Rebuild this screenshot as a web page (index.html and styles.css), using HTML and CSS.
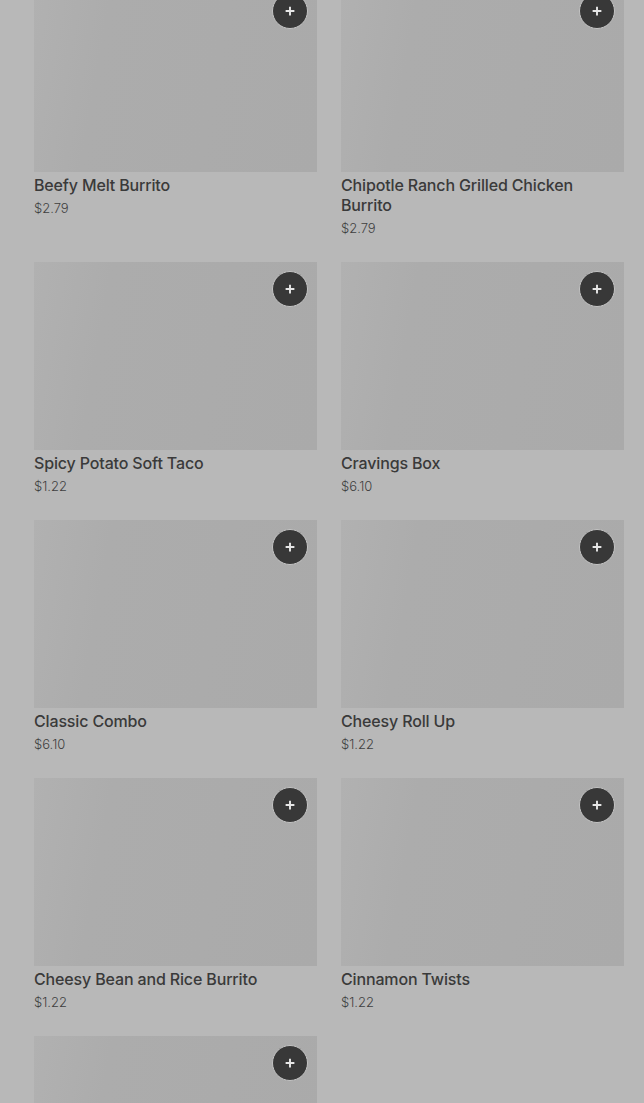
FILE: index.html
```html
<!DOCTYPE html>
<html>
<head>
<meta charset="utf-8">
<link rel="stylesheet" href="styles.css">
</head>
<body>
<div class="grid">
  <div class="card"><div class="thumb"><button class="add"><svg viewBox="0 0 16 16"><path d="M8 3v10M3 8h10"/></svg></button></div><div class="name">Beefy Melt Burrito</div><div class="price">$2.79</div></div>
  <div class="card"><div class="thumb"><button class="add"><svg viewBox="0 0 16 16"><path d="M8 3v10M3 8h10"/></svg></button></div><div class="name">Chipotle Ranch Grilled Chicken Burrito</div><div class="price">$2.79</div></div>
  <div class="card"><div class="thumb"><button class="add"><svg viewBox="0 0 16 16"><path d="M8 3v10M3 8h10"/></svg></button></div><div class="name">Spicy Potato Soft Taco</div><div class="price">$1.22</div></div>
  <div class="card"><div class="thumb"><button class="add"><svg viewBox="0 0 16 16"><path d="M8 3v10M3 8h10"/></svg></button></div><div class="name">Cravings Box</div><div class="price">$6.10</div></div>
  <div class="card"><div class="thumb"><button class="add"><svg viewBox="0 0 16 16"><path d="M8 3v10M3 8h10"/></svg></button></div><div class="name">Classic Combo</div><div class="price">$6.10</div></div>
  <div class="card"><div class="thumb"><button class="add"><svg viewBox="0 0 16 16"><path d="M8 3v10M3 8h10"/></svg></button></div><div class="name">Cheesy Roll Up</div><div class="price">$1.22</div></div>
  <div class="card"><div class="thumb"><button class="add"><svg viewBox="0 0 16 16"><path d="M8 3v10M3 8h10"/></svg></button></div><div class="name">Cheesy Bean and Rice Burrito</div><div class="price">$1.22</div></div>
  <div class="card"><div class="thumb"><button class="add"><svg viewBox="0 0 16 16"><path d="M8 3v10M3 8h10"/></svg></button></div><div class="name">Cinnamon Twists</div><div class="price">$1.22</div></div>
  <div class="card"><div class="thumb"><button class="add"><svg viewBox="0 0 16 16"><path d="M8 3v10M3 8h10"/></svg></button></div></div>
</div>
</body>
</html>
```
FILE: styles.css
```css
html, body {
  margin: 0;
  padding: 0;
  background: #b8b8b8;
  overflow: hidden;
  height: 1103px;
}
body {
  font-family: Inter, Roboto, "Liberation Sans", sans-serif;
  color: #3b3b3b;
}
.grid {
  display: grid;
  grid-template-columns: 283px 283px;
  column-gap: 24px;
  row-gap: 25px;
  padding: 0 20px 0 34px;
  margin-top: -16px;
}
.card {
  display: flex;
  flex-direction: column;
}
.thumb {
  position: relative;
  height: 188px;
  background: linear-gradient(100deg, #b1b1b1 0%, #acacac 25%, #aaaaaa 100%);
}
.add {
  position: absolute;
  top: 9px;
  right: 9px;
  width: 36px;
  height: 36px;
  border-radius: 50%;
  background: #383838;
  border: 1px solid #c4c4c4;
  padding: 0;
  display: flex;
  align-items: center;
  justify-content: center;
  box-sizing: border-box;
}
.add svg {
  width: 14px;
  height: 14px;
  stroke: #e6e6e6;
  stroke-width: 2.2;
  fill: none;
}
.name {
  margin-top: 3px;
  font-size: 16px;
  line-height: 20px;
  font-weight: 500;
  letter-spacing: -0.15px;
  color: #3a3a3a;
}
.price {
  margin-top: 4px;
  font-size: 13px;
  line-height: 18px;
  font-weight: 300;
  color: #3f3f3f;
}
```
